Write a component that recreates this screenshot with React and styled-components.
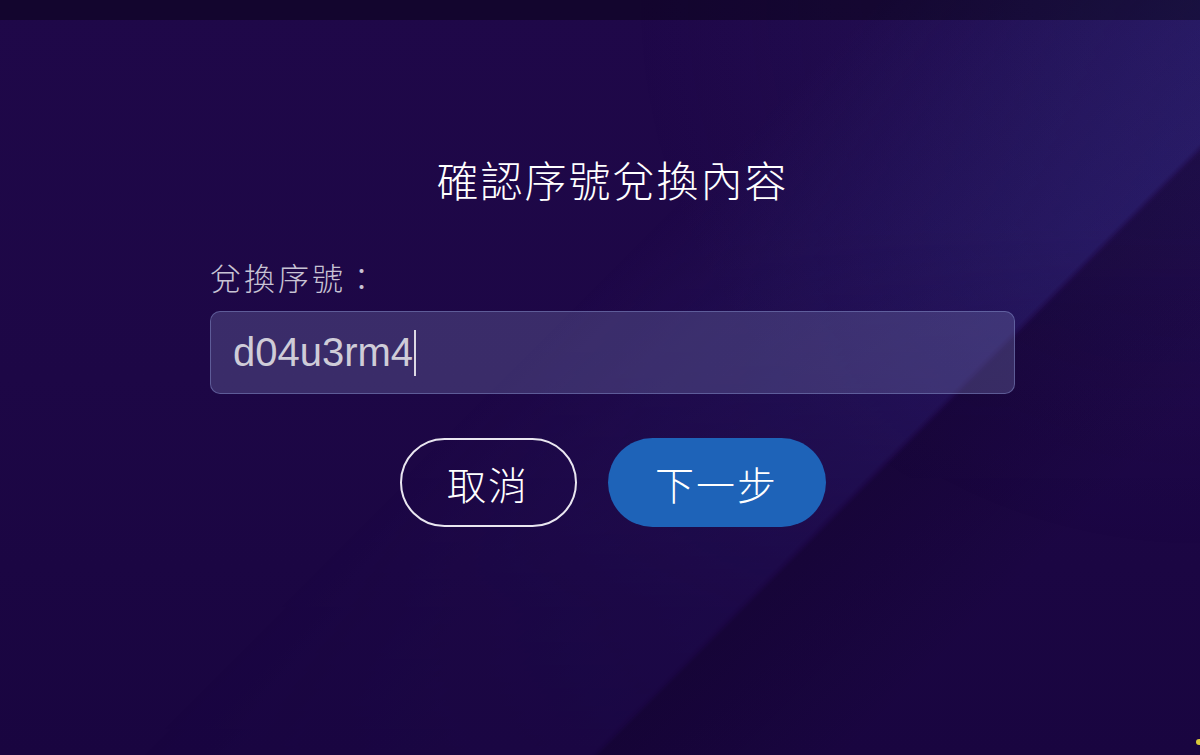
import React from "react";
import styled, { createGlobalStyle } from "styled-components";

const GlobalStyle = createGlobalStyle`
  html, body {
    margin: 0;
    padding: 0;
    height: 100%;
  }
  body {
    background: #1a0640;
    font-family: "Noto Sans CJK TC", "Noto Sans CJK SC", sans-serif;
    -webkit-font-smoothing: antialiased;
  }
  #root {
    height: 100%;
  }
`;

const Screen = styled.div`
  position: relative;
  width: 1200px;
  height: 755px;
  overflow: hidden;
  display: flex;
  flex-direction: column;
  background:
    linear-gradient(
      135deg,
      transparent 0%,
      transparent 69%,
      rgba(8, 0, 20, 0.22) 69.3%,
      transparent 82%
    ),
    linear-gradient(to bottom, #1f0849 0%, #1d0746 50%, #190540 100%);

  /* diagonal light band, fading toward the bottom */
  &::before {
    content: "";
    position: absolute;
    inset: 0;
    pointer-events: none;
    background:
      linear-gradient(
        135deg,
        transparent 0%,
        transparent 45%,
        rgba(52, 58, 150, 0.12) 54%,
        rgba(60, 66, 165, 0.24) 68.7%,
        transparent 69.1%
      ),
      radial-gradient(circle at 100% 0%, rgba(70, 80, 170, 0.14), transparent 40%);
    -webkit-mask-image: linear-gradient(to bottom, #000 0%, #000 30%, rgba(0, 0, 0, 0.25) 80%, rgba(0, 0, 0, 0.15) 100%);
    mask-image: linear-gradient(to bottom, #000 0%, #000 30%, rgba(0, 0, 0, 0.25) 80%, rgba(0, 0, 0, 0.15) 100%);
  }
`;

const TopBar = styled.div`
  position: relative;
  z-index: 1;
  flex: 0 0 20px;
  background: rgba(0, 0, 0, 0.36);
`;

const Content = styled.main`
  position: relative;
  z-index: 1;
  display: flex;
  flex-direction: column;
  align-items: center;
  padding: 134px 0 0 25px;
`;

const Title = styled.h1`
  margin: 0;
  font-size: 42px;
  line-height: 50px;
  font-weight: 300;
  letter-spacing: 2px;
  color: #ffffff;
`;

const Form = styled.div`
  width: 805px;
  margin-top: 53px;
  display: flex;
  flex-direction: column;
`;

const Label = styled.label`
  font-size: 31px;
  line-height: 40px;
  font-weight: 300;
  letter-spacing: 3px;
  color: #c8c3d4;
`;

const Field = styled.div`
  box-sizing: border-box;
  margin-top: 14px;
  height: 83px;
  padding: 0 22px;
  display: flex;
  align-items: center;
  border: 1px solid rgba(130, 140, 200, 0.5);
  border-radius: 10px;
  background: rgba(110, 110, 170, 0.36);
`;

const Value = styled.span`
  font-family: "Liberation Sans", Arial, sans-serif;
  font-size: 40px;
  color: #cfccd8;
`;

const Caret = styled.span`
  display: inline-block;
  width: 2px;
  height: 46px;
  margin-left: 1px;
  background: #dcd9e4;
`;

const Actions = styled.div`
  margin-top: 44px;
  display: flex;
  justify-content: center;
  gap: 31px;
`;

const Button = styled.button`
  box-sizing: border-box;
  height: 89px;
  width: ${(p) => p.$width}px;
  border-radius: 45px;
  font-family: "Noto Sans CJK TC", "Noto Sans CJK SC", sans-serif;
  font-size: 39px;
  font-weight: 300;
  letter-spacing: 2px;
  color: #ffffff;
  cursor: pointer;
  border: ${(p) => (p.$primary ? "none" : "2px solid #e9e6f0")};
  background: ${(p) => (p.$primary ? "#1e63b8" : "transparent")};
`;

const Spark = styled.span`
  position: absolute;
  right: -2px;
  bottom: 10px;
  width: 6px;
  height: 6px;
  border-radius: 50%;
  background: #d8c83a;
`;

export default function App() {
  return (
    <>
      <GlobalStyle />
      <Screen>
        <TopBar />
        <Content>
          <Title>確認序號兌換內容</Title>
          <Form>
            <Label>兌換序號：</Label>
            <Field>
              <Value>d04u3rm4</Value>
              <Caret />
            </Field>
            <Actions>
              <Button $width={177}>取消</Button>
              <Button $width={218} $primary>
                下一步
              </Button>
            </Actions>
          </Form>
        </Content>
        <Spark />
      </Screen>
    </>
  );
}
